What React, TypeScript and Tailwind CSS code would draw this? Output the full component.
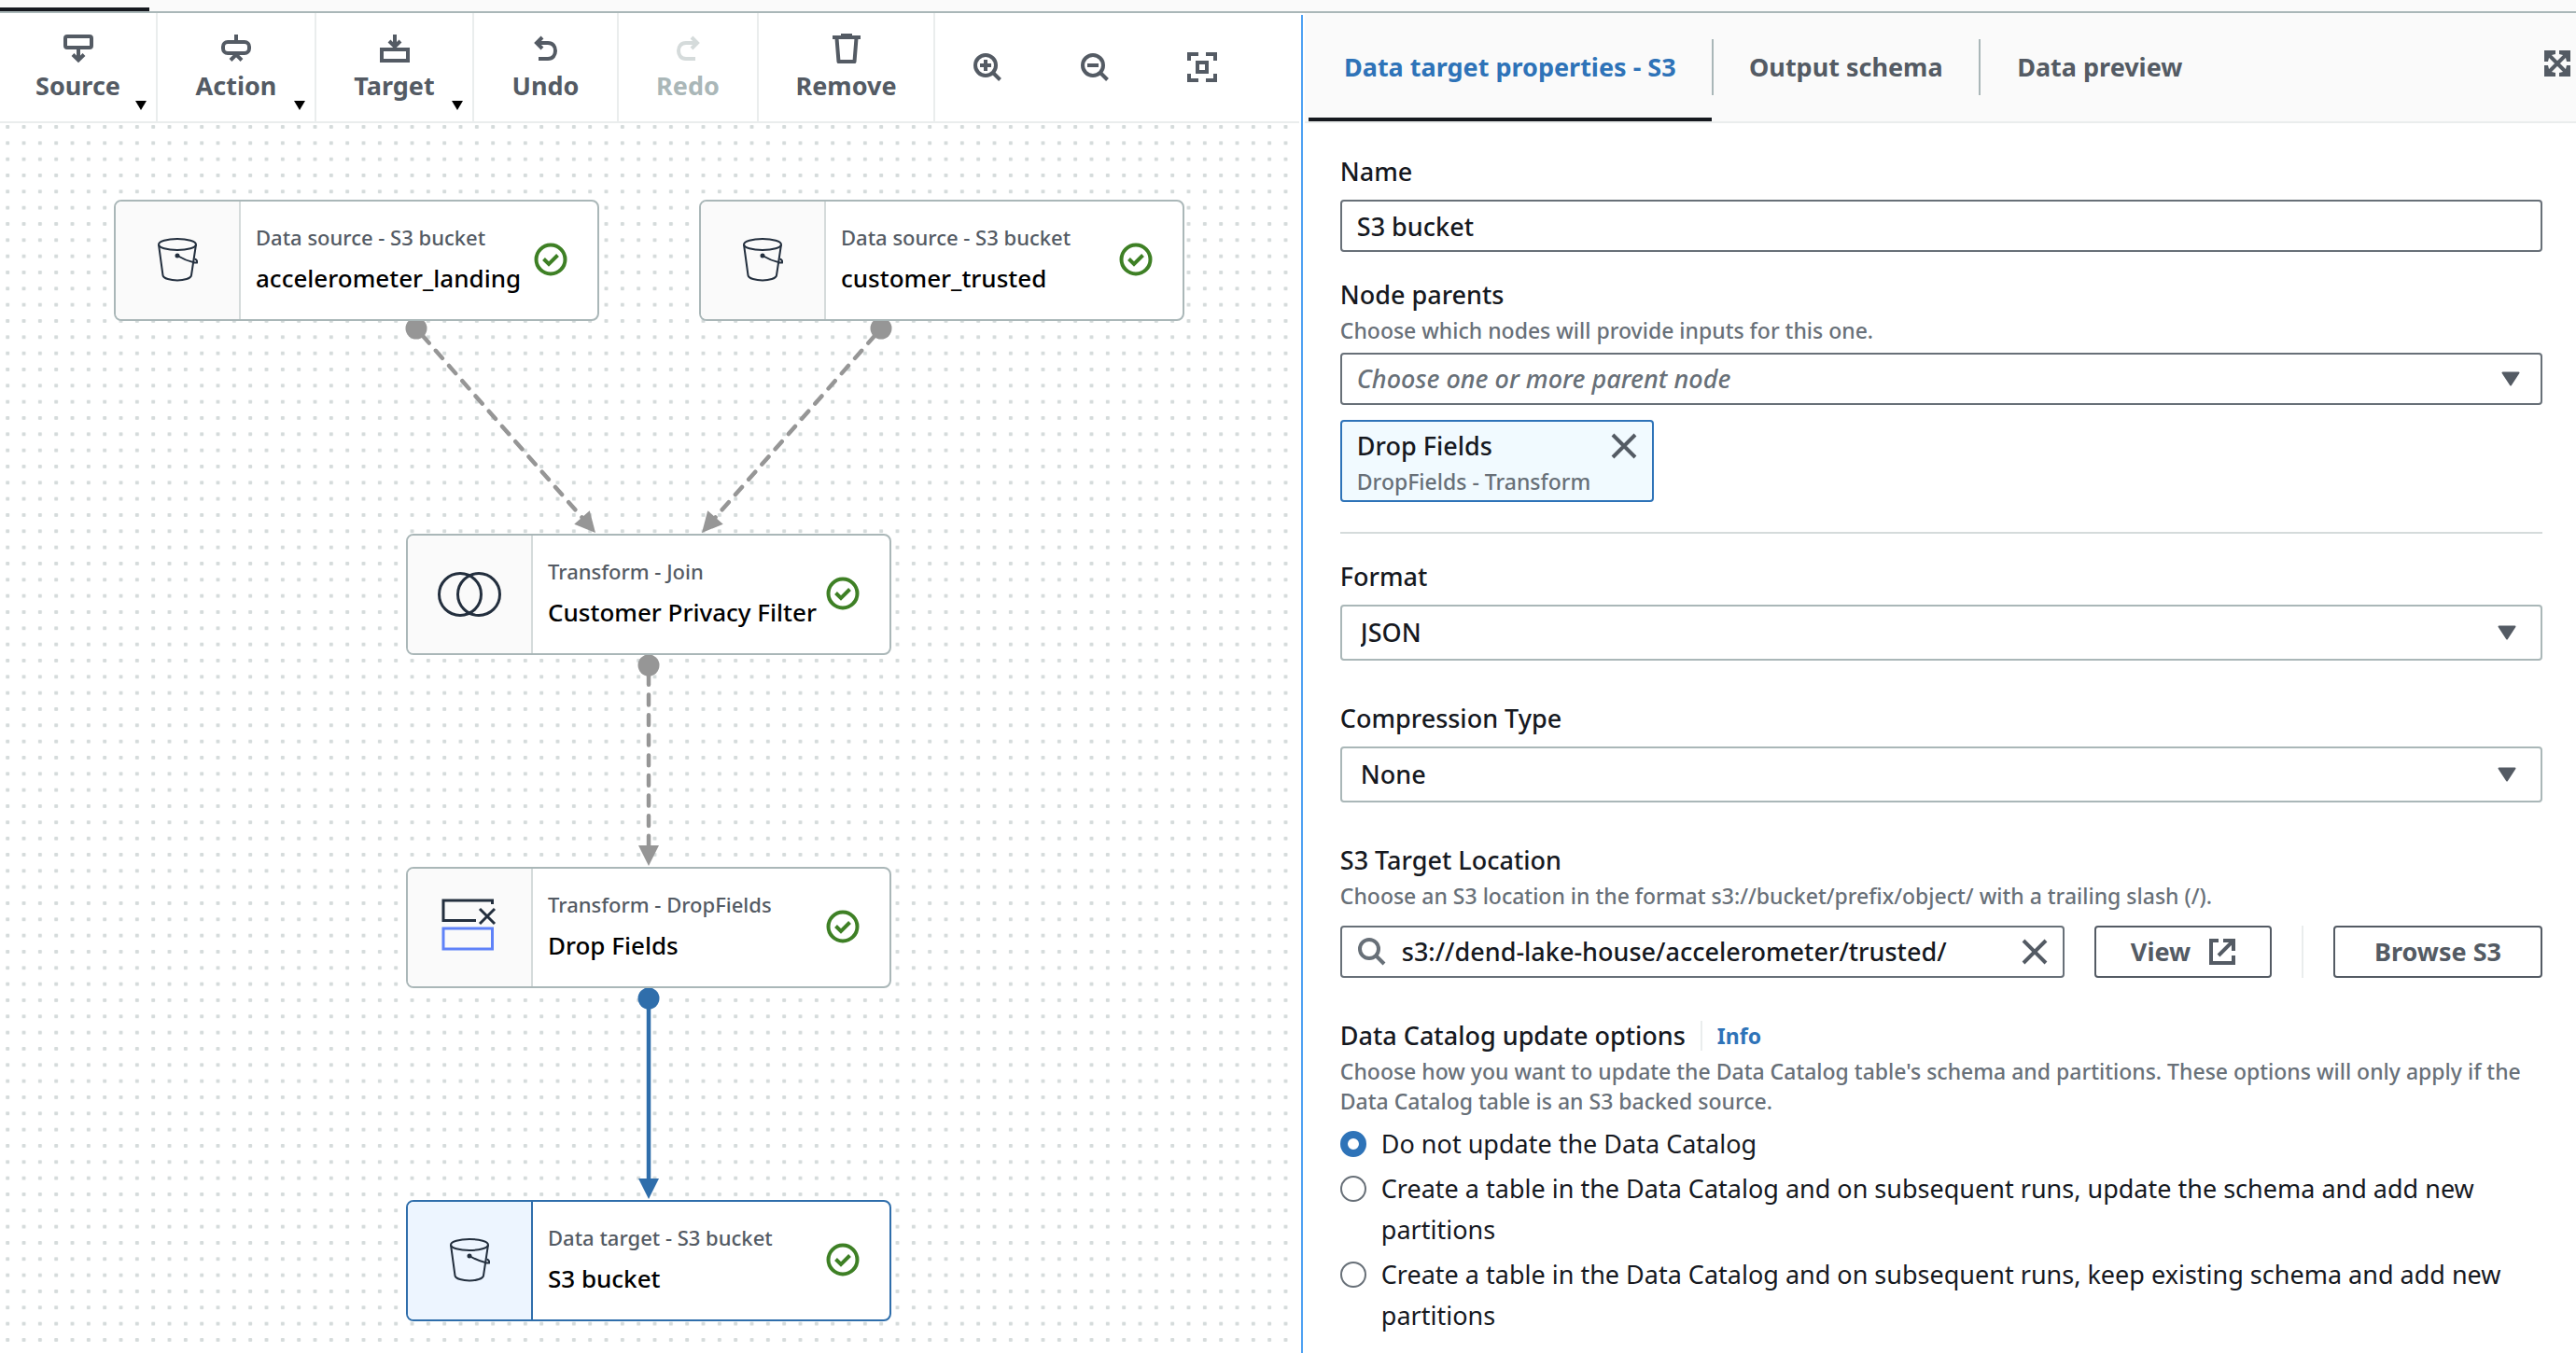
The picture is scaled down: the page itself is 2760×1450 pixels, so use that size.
import React, { useState } from "react";

type IconProps = { className?: string };

const strokeIcon = {
  viewBox: "0 0 32 32",
  fill: "none",
  stroke: "currentColor",
  strokeWidth: 4,
  "aria-hidden": true,
} as const;

function SourceIcon({ className }: IconProps) {
  return (
    <svg {...strokeIcon} className={className}>
      <rect x="2" y="3" width="28" height="12" rx="2" />
      <path d="M16 15V28M10 22.5L16 28.5L22 22.5" />
    </svg>
  );
}

function ActionIcon({ className }: IconProps) {
  return (
    <svg {...strokeIcon} className={className}>
      <rect x="2" y="9" width="28" height="12" rx="5" />
      <path d="M16 1V9M10 28.5L16 22.5L22 28.5" />
    </svg>
  );
}

function TargetIcon({ className }: IconProps) {
  return (
    <svg {...strokeIcon} className={className}>
      <rect x="2" y="17" width="28" height="12" />
      <path d="M16 1V14M10 8L16 14L22 8" />
    </svg>
  );
}

function UndoIcon({ className }: IconProps) {
  return (
    <svg {...strokeIcon} className={className}>
      <path d="M12 4L6 10L12 16M7 10H18C23.500 10 26 14 26 18.500S23.500 27 18 27H8" />
    </svg>
  );
}

function RedoIcon({ className }: IconProps) {
  return (
    <svg {...strokeIcon} className={className}>
      <path d="M20 4L26 10L20 16M25 10H14C8.500 10 6 14 6 18.500S8.500 27 14 27H24" />
    </svg>
  );
}

function RemoveIcon({ className }: IconProps) {
  return (
    <svg {...strokeIcon} className={className}>
      <path d="M1 4H31M10 2H22" />
      <path d="M5.500 5L7.500 30H24.500L26.500 5" strokeLinejoin="round" />
    </svg>
  );
}

function ZoomInIcon({ className }: IconProps) {
  return (
    <svg {...strokeIcon} className={className}>
      <circle cx="14" cy="14" r="11" />
      <path d="M21.500 21.500L29.500 29.500M8 14H20M14 8V20" />
    </svg>
  );
}

function ZoomOutIcon({ className }: IconProps) {
  return (
    <svg {...strokeIcon} className={className}>
      <circle cx="14" cy="14" r="11" />
      <path d="M21.500 21.500L29.500 29.500M8 14H20" />
    </svg>
  );
}

function FitIcon({ className }: IconProps) {
  return (
    <svg {...strokeIcon} className={className}>
      <path d="M2 9V2H12M20 2H30V9M30 23V30H20M12 30H2V23" />
      <rect x="11" y="11" width="10" height="10" />
    </svg>
  );
}

function ExpandIcon({ className }: IconProps) {
  return (
    <svg viewBox="0 0 28 28" className={className} aria-hidden="true">
      <path
        d="M0 0H12V4L8 5L5 8L4 12H0ZM28 0V12H24L23 8L20 5L16 4V0ZM0 28V16H4L5 20L8 23L12 24V28ZM28 28H16V24L20 23L23 20L24 16H28Z"
        fill="currentColor"
      />
      <path d="M3 3L25 25M25 3L3 25" stroke="currentColor" strokeWidth="4" />
    </svg>
  );
}

function CloseIcon({ className }: IconProps) {
  return (
    <svg viewBox="0 0 28 28" fill="none" stroke="currentColor" strokeWidth="4" className={className} aria-hidden="true">
      <path d="M2 2L26 26M26 2L2 26" />
    </svg>
  );
}

function SearchIcon({ className }: IconProps) {
  return (
    <svg {...strokeIcon} className={className}>
      <circle cx="13" cy="13" r="10" />
      <path d="M20 20L29 29" />
    </svg>
  );
}

function ExternalIcon({ className }: IconProps) {
  return (
    <svg viewBox="0 0 28 28" fill="none" stroke="currentColor" strokeWidth="4" className={className} aria-hidden="true">
      <path d="M10 2H2V26H26V18" />
      <path d="M15 2H26V13M26 2L10 18" />
    </svg>
  );
}

function CaretIcon({ className }: IconProps) {
  return (
    <svg viewBox="0 0 20 16" className={className} aria-hidden="true">
      <path d="M1.500 1.500H18.500L10 14.500Z" fill="currentColor" stroke="currentColor" strokeWidth="2" strokeLinejoin="round" />
    </svg>
  );
}

function CheckIcon({ className }: IconProps) {
  return (
    <svg viewBox="0 0 36 36" fill="none" stroke="currentColor" strokeWidth="4" className={className} aria-hidden="true">
      <circle cx="18" cy="18" r="15.500" />
      <path d="M10.500 17.500L16 23L25.500 13.500" />
    </svg>
  );
}

function BucketIcon() {
  return (
    <svg viewBox="0 0 44 48" fill="none" stroke="#232f3e" strokeWidth="2" className="h-12 w-11" aria-hidden="true">
      <ellipse cx="22" cy="7" rx="20" ry="6" />
      <path d="M2 7L6.500 40C7 43.500 15 45.500 22 45.500S36.500 43.500 37 40L42 7" />
      <path d="M22 19C27 22 34 25 40.500 26.500L43 26.500C43.500 24.500 42.500 23 40.500 22.500" />
      <circle cx="22" cy="19" r="1.500" fill="#232f3e" />
    </svg>
  );
}

function JoinIcon() {
  return (
    <svg viewBox="0 0 68 50" fill="none" stroke="#232f3e" strokeWidth="3" className="h-[50px] w-[68px]" aria-hidden="true">
      <circle cx="24" cy="25" r="22.500" />
      <circle cx="44" cy="25" r="22.500" />
    </svg>
  );
}

function DropFieldsIcon() {
  return (
    <svg viewBox="0 3 60 56" fill="none" stroke="#232f3e" strokeWidth="3" className="h-14 w-[60px] overflow-visible" aria-hidden="true">
      <path d="M54.500 6V2H2V23.500H37" />
      <path d="M41 11L57 27M57 11L41 27" />
      <rect x="2" y="32" width="52.500" height="22" stroke="#5f82f8" />
    </svg>
  );
}

type ToolProps = {
  label: string;
  icon: React.ReactNode;
  width: string;
  menu?: boolean;
  disabled?: boolean;
};

function Tool({ label, icon, width, menu, disabled }: ToolProps) {
  return (
    <button
      type="button"
      disabled={disabled}
      className={`relative flex h-[116px] flex-col items-center gap-2 border-r-2 border-[#eaeded] pt-[22px] text-[27px]/8 font-bold ${width} ${
        disabled ? "text-[#aab7b8]" : "text-[#545b64]"
      }`}
    >
      {icon}
      {label}
      {menu && (
        <svg viewBox="0 0 12 10" className="absolute right-2.5 bottom-3 h-2.5 w-3 text-black" aria-hidden="true">
          <path d="M0 0H12L6 10Z" fill="currentColor" />
        </svg>
      )}
    </button>
  );
}

type NodeProps = {
  kind: string;
  name: string;
  icon: React.ReactNode;
  place: string;
  selected?: boolean;
};

function FlowNode({ kind, name, icon, place, selected }: NodeProps) {
  return (
    <article
      className={`absolute flex h-[130px] w-[520px] overflow-hidden rounded-lg border-2 bg-white ${place} ${
        selected ? "border-[#2f6eab]" : "border-[#aab7b8]"
      }`}
    >
      <div
        className={`flex w-[134px] shrink-0 items-center justify-center border-r-2 ${
          selected ? "border-[#2f6eab] bg-[#edf5ff]" : "border-[#d5dbdb] bg-[#fafafa]"
        }`}
      >
        {icon}
      </div>
      <div className="flex flex-col pt-4 pl-4 font-medium whitespace-nowrap">
        <p className="text-[22px]/11 text-[#545b64]">{kind}</p>
        <h3 className="text-[26px]/11 text-black">{name}</h3>
      </div>
      <CheckIcon className="absolute top-11 right-8 size-9 text-[#3e8025]" />
    </article>
  );
}

const edges = [
  { from: [446, 220], to: [638, 439] },
  { from: [944, 220], to: [752, 439] },
  { from: [695, 581], to: [695, 796] },
  { from: [695, 938], to: [695, 1153], active: true },
];

function Edges() {
  return (
    <svg className="absolute inset-0 h-full w-full" aria-hidden="true">
      <defs>
        <pattern id="grid-dots" x="-0.500" y="-4.700" width="17.333" height="17.333" patternUnits="userSpaceOnUse">
          <rect x="6.700" y="6.700" width="4" height="4" rx="1" fill="#d5dbdb" />
        </pattern>
      </defs>
      <rect width="100%" height="100%" fill="url(#grid-dots)" />
      {edges.map(({ from: [x1, y1], to: [x2, y2], active }) => {
        const length = Math.hypot(x2 - x1, y2 - y1);
        const ux = (x2 - x1) / length;
        const uy = (y2 - y1) / length;
        const bx = x2 - ux * 22;
        const by = y2 - uy * 22;
        const color = active ? "#2f6eab" : "#969696";
        return (
          <g key={`${x1}-${y1}`} fill={color} stroke="none">
            <path
              d={`M${x1 + ux * 10} ${y1 + uy * 10}L${bx} ${by}`}
              stroke={color}
              strokeWidth="4.5"
              strokeLinecap="round"
              strokeDasharray={active ? undefined : "10.8 10.8"}
            />
            <circle cx={x1} cy={y1} r="11.500" />
            <path
              d={`M${x2} ${y2}L${bx - uy * 11} ${by + ux * 11}L${bx + uy * 11} ${by - ux * 11}Z`}
            />
          </g>
        );
      })}
    </svg>
  );
}

const labelClass = "block text-[27px]/11 text-[#16191f]";
const helpClass = "text-[23px]/8 text-[#687078]";

type SelectProps = { id: string; label: string; options: string[] };

function SelectField({ id, label, options }: SelectProps) {
  return (
    <div>
      <label htmlFor={id} className={labelClass}>
        {label}
      </label>
      <div className="relative mt-2">
        <select
          id={id}
          className="block h-[60px] w-full appearance-none rounded border-2 border-[#aab7b8] bg-white px-5 text-[27px] text-[#16191f]"
        >
          {options.map((option) => (
            <option key={option}>{option}</option>
          ))}
        </select>
        <CaretIcon className="pointer-events-none absolute top-[22px] right-7 h-4 w-5 text-[#545b64]" />
      </div>
    </div>
  );
}

const updateOptions = [
  "Do not update the Data Catalog",
  "Create a table in the Data Catalog and on subsequent runs, update the schema and add new partitions",
  "Create a table in the Data Catalog and on subsequent runs, keep existing schema and add new partitions",
];

export default function App() {
  const [choice, setChoice] = useState(0);
  const [name, setName] = useState("S3 bucket");
  const [location, setLocation] = useState("s3://dend-lake-house/accelerometer/trusted/");

  return (
    <div className="flex min-h-screen flex-col bg-white font-['Noto_Sans',sans-serif]">
      <div className="flex h-3.5 items-end border-b-2 border-[#aab7b8] bg-[#fafafa]">
        <div className="h-1 w-40 bg-[#16191f]" />
      </div>

      <main className="flex flex-1">
        <section aria-label="Visual editor" className="flex w-[50.5%] flex-col pr-0.5">
          <div role="toolbar" className="flex border-b-2 border-[#eaeded]">
            <Tool label="Source" icon={<SourceIcon className="size-8" />} width="w-[169px]" menu />
            <Tool label="Action" icon={<ActionIcon className="size-8" />} width="w-[170px]" menu />
            <Tool label="Target" icon={<TargetIcon className="size-8" />} width="w-[169px]" menu />
            <Tool label="Undo" icon={<UndoIcon className="size-8" />} width="w-[155px]" />
            <Tool
              label="Redo"
              icon={<RedoIcon className="size-8 text-[#d5dbdb]" />}
              width="w-[150px]"
              disabled
            />
            <Tool label="Remove" icon={<RemoveIcon className="size-8" />} width="w-[189px]" />
            <div className="flex items-center gap-[83px] pl-10 text-[#545b64]">
              <button type="button" aria-label="Zoom in">
                <ZoomInIcon className="size-8" />
              </button>
              <button type="button" aria-label="Zoom out">
                <ZoomOutIcon className="size-8" />
              </button>
              <button type="button" aria-label="Fit to screen">
                <FitIcon className="size-8" />
              </button>
            </div>
          </div>

          <div className="relative flex-1 overflow-hidden">
            <Edges />
            <FlowNode
              kind="Data source - S3 bucket"
              name="accelerometer_landing"
              icon={<BucketIcon />}
              place="top-[82px] left-[122px]"
            />
            <FlowNode
              kind="Data source - S3 bucket"
              name="customer_trusted"
              icon={<BucketIcon />}
              place="top-[82px] left-[749px]"
            />
            <FlowNode
              kind="Transform - Join"
              name="Customer Privacy Filter"
              icon={<JoinIcon />}
              place="top-[440px] left-[435px]"
            />
            <FlowNode
              kind="Transform - DropFields"
              name="Drop Fields"
              icon={<DropFieldsIcon />}
              place="top-[797px] left-[435px]"
            />
            <FlowNode
              kind="Data target - S3 bucket"
              name="S3 bucket"
              icon={<BucketIcon />}
              place="top-[1154px] left-[435px]"
              selected
            />
          </div>
        </section>

        <div role="separator" aria-orientation="vertical" className="mt-0.5 w-0.5 bg-[#4ea1f3]" />

        <section aria-label="Node properties" className="ml-0.5 min-w-0 flex-1">
          <div className="flex h-[118px] items-stretch border-b-2 border-[#eaeded] bg-[#fafafa] pl-1 text-[27px]/8 font-bold text-[#545b64]">
            <div role="tablist" className="flex items-stretch">
              <button
                type="button"
                role="tab"
                aria-selected="true"
                className="w-[432px] border-b-4 border-[#16191f] pt-1 text-[#2e73b8]"
              >
                Data target properties - S3
              </button>
              <div className="my-7 w-0.5 bg-[#aab7b8]" />
              <button type="button" role="tab" aria-selected="false" className="w-[284px]">
                Output schema
              </button>
              <div className="my-7 w-0.5 bg-[#aab7b8]" />
              <button type="button" role="tab" aria-selected="false" className="w-64">
                Data preview
              </button>
            </div>
            <button type="button" aria-label="Expand panel" className="mr-1.5 mb-2 ml-auto">
              <ExpandIcon className="size-7" />
            </button>
          </div>

          <form
            className="flex flex-col pt-[30px] pr-9 pb-4 pl-[38px] font-medium"
            onSubmit={(e) => e.preventDefault()}
          >
            <label htmlFor="node-name" className={labelClass}>
              Name
            </label>
            <input
              id="node-name"
              type="text"
              value={name}
              onChange={(e) => setName(e.target.value)}
              className="mt-2 h-14 rounded border-2 border-[#687078] bg-white px-4 text-[27px] text-[#16191f]"
            />

            <label htmlFor="node-parents" className={`mt-6 ${labelClass}`}>
              Node parents
            </label>
            <p className={helpClass}>Choose which nodes will provide inputs for this one.</p>
            <div className="relative mt-2">
              <select
                id="node-parents"
                className="block h-14 w-full appearance-none rounded border-2 border-[#687078] bg-white px-4 text-[27px] text-[#687078] italic"
              >
                <option>Choose one or more parent node</option>
              </select>
              <CaretIcon className="pointer-events-none absolute top-5 right-6 h-4 w-5 text-[#545b64]" />
            </div>

            <div className="mt-4 flex h-[88px] w-[336px] items-start justify-between rounded border-2 border-[#2e73b8] bg-[#f1faff] px-4 pt-1">
              <div className="whitespace-nowrap">
                <p className="text-[27px]/11 text-[#16191f]">Drop Fields</p>
                <p className={helpClass}>DropFields - Transform</p>
              </div>
              <button type="button" aria-label="Remove Drop Fields" className="mt-2 -ml-8 text-[#545b64]">
                <CloseIcon className="size-7" />
              </button>
            </div>

            <hr className="mt-8 mb-6 border-t-2 border-[#d5dbdb]" />

            <div className="flex flex-col gap-10">
              <SelectField id="format" label="Format" options={["JSON", "Parquet", "CSV", "Avro"]} />
              <SelectField id="compression" label="Compression Type" options={["None", "GZIP", "BZIP2"]} />
            </div>

            <label htmlFor="s3-location" className={`mt-10 ${labelClass}`}>
              S3 Target Location
            </label>
            <p className={helpClass}>
              Choose an S3 location in the format s3://bucket/prefix/object/ with a trailing slash (/).
            </p>
            <div className="mt-4 flex h-14 gap-8">
              <div className="flex min-w-0 flex-1 items-center gap-4 rounded border-2 border-[#687078] bg-white pr-4 pl-4">
                <SearchIcon className="size-8 shrink-0 text-[#687078]" />
                <input
                  id="s3-location"
                  type="text"
                  value={location}
                  onChange={(e) => setLocation(e.target.value)}
                  className="min-w-0 flex-1 bg-transparent text-[27px] text-[#16191f] outline-none"
                />
                <button type="button" aria-label="Clear location" className="text-[#545b64]">
                  <CloseIcon className="size-7" />
                </button>
              </div>
              <button
                type="button"
                className="flex w-[190px] items-center justify-center gap-5 rounded border-2 border-[#545b64] text-[27px] font-bold text-[#545b64]"
              >
                View
                <ExternalIcon className="size-7" />
              </button>
              <div className="w-0.5 bg-[#eaeded]" />
              <button
                type="button"
                className="w-56 rounded border-2 border-[#545b64] text-[27px] font-bold text-[#545b64]"
              >
                Browse S3
              </button>
            </div>

            <fieldset className="mt-10">
              <legend className="flex items-center text-[27px]/11 text-[#16191f]">
                Data Catalog update options
                <span className="mx-4 h-8 w-0.5 bg-[#eaeded]" />
                <a href="#info" className="text-[23px] font-bold text-[#2e73b8]">
                  Info
                </a>
              </legend>
              <p className={helpClass}>
                Choose how you want to update the Data Catalog table's schema and partitions. These options will only
                apply if the Data Catalog table is an S3 backed source.
              </p>
              <div className="mt-2 flex flex-col gap-1 font-normal">
                {updateOptions.map((option, index) => (
                  <label key={option} className="flex items-start gap-4 text-[27px]/11 text-[#16191f]">
                    <input
                      type="radio"
                      name="catalog-update"
                      checked={choice === index}
                      onChange={() => setChoice(index)}
                      className="mt-2 size-7 shrink-0 appearance-none rounded-full border-2 border-[#687078] bg-white checked:border-8 checked:border-[#2e73b8]"
                    />
                    {option}
                  </label>
                ))}
              </div>
            </fieldset>
          </form>
        </section>
      </main>
    </div>
  );
}
